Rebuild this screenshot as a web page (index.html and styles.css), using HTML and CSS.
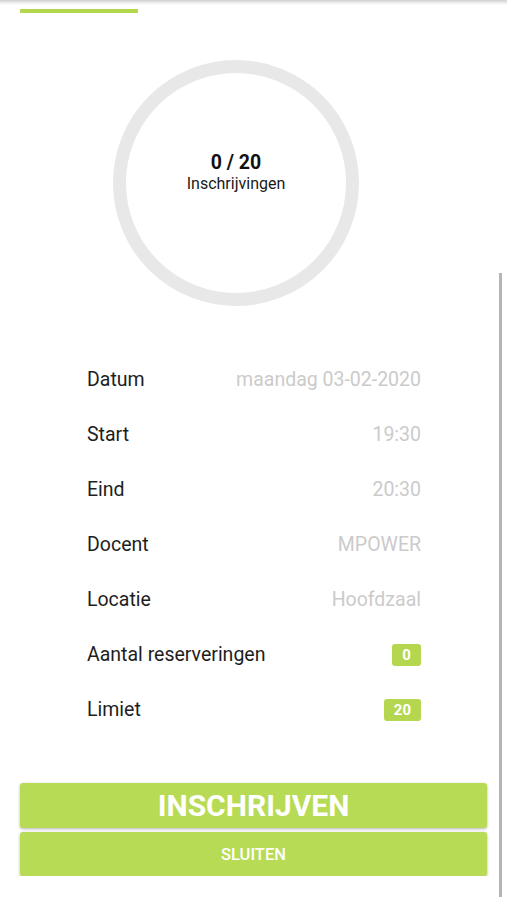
FILE: index.html
```html
<!DOCTYPE html>
<html lang="nl">
<head>
<meta charset="utf-8">
<title>Les</title>
<link rel="stylesheet" href="styles.css">
</head>
<body>
<div class="topshadow"></div>
<div class="tabbar"><div class="tab-indicator"></div></div>
<main class="content">
  <div class="ring">
    <div class="ring-count">0 / 20</div>
    <div class="ring-label">Inschrijvingen</div>
  </div>
  <ul class="details">
    <li class="row"><span class="label">Datum</span><span class="value">maandag 03-02-2020</span></li>
    <li class="row"><span class="label">Start</span><span class="value">19:30</span></li>
    <li class="row"><span class="label">Eind</span><span class="value">20:30</span></li>
    <li class="row"><span class="label">Docent</span><span class="value">MPOWER</span></li>
    <li class="row"><span class="label">Locatie</span><span class="value">Hoofdzaal</span></li>
    <li class="row"><span class="label">Aantal reserveringen</span><span class="badge">0</span></li>
    <li class="row"><span class="label">Limiet</span><span class="badge">20</span></li>
  </ul>
  <div class="actions">
    <button class="btn btn-primary">INSCHRIJVEN</button>
    <button class="btn btn-secondary">SLUITEN</button>
  </div>
</main>
<div class="scrollbar"></div>
</body>
</html>
```
FILE: styles.css
```css
html, body {
  margin: 0;
  padding: 0;
  background: #ffffff;
  font-family: Roboto, "Noto Sans", "Liberation Sans", sans-serif;
  color: #222222;
}
.topshadow {
  height: 5px;
  background: linear-gradient(to bottom, #cfcfcf, #efefef 60%, #ffffff);
}
.tabbar {
  padding: 4px 0 0 20px;
  height: 9px;
}
.tab-indicator {
  width: 118px;
  height: 4px;
  background: #b3d84c;
}
.content {
  display: flex;
  flex-direction: column;
}
.ring {
  box-sizing: border-box;
  width: 246px;
  height: 246px;
  margin: 42px 0 0 113px;
  border: 13px solid #e8e8e8;
  border-radius: 50%;
  display: flex;
  flex-direction: column;
  align-items: center;
  justify-content: center;
  padding-bottom: 22px;
}
.ring-count {
  font-size: 19.5px;
  font-weight: 700;
  color: #111111;
  line-height: 23px;
}
.ring-label {
  font-size: 16px;
  color: #1a1a1a;
  line-height: 20px;
}
.details {
  list-style: none;
  margin: 46px 0 0 0;
  padding: 0 86px 0 87px;
}
.row {
  height: 55px;
  display: flex;
  align-items: center;
  justify-content: space-between;
  font-size: 19.5px;
}
.label {
  color: #1e1e1e;
}
.value {
  color: #cbcbcb;
}
.badge {
  background: #b5d74f;
  color: #ffffff;
  font-size: 15px;
  font-weight: 700;
  line-height: 22px;
  padding: 0 10px;
  border-radius: 3px;
  min-width: 9px;
  text-align: center;
}
.actions {
  margin: 46px 20px 0 20px;
  display: flex;
  flex-direction: column;
  gap: 4px;
}
.btn {
  border: none;
  border-radius: 3px;
  background: #b8db55;
  color: #ffffff;
  font-family: Roboto, "Noto Sans", "Liberation Sans", sans-serif;
  box-shadow: 0 1px 3px rgba(0, 0, 0, 0.3);
  padding: 0;
  width: 100%;
}
.btn-primary {
  height: 45px;
  font-size: 30px;
  font-weight: 700;
}
.btn-secondary {
  height: 44px;
  font-size: 16.5px;
  font-weight: 500;
}
.scrollbar {
  position: absolute;
  left: 499px;
  top: 273px;
  width: 3px;
  height: 624px;
  background: #b5b5b5;
}
```
